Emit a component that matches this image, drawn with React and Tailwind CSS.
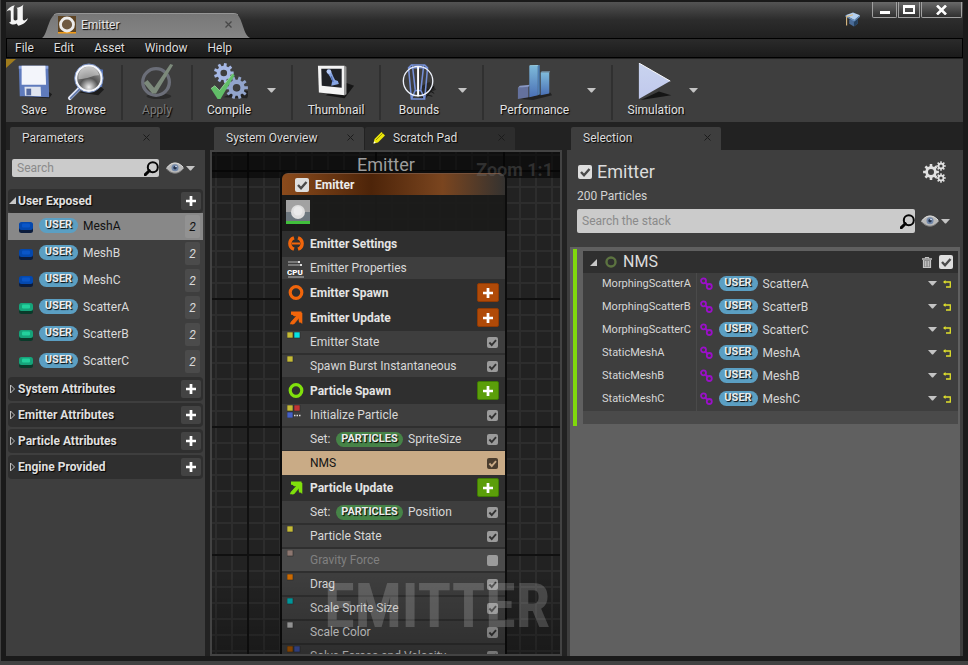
import React from "react";

const SHADOW = "[text-shadow:1px_1px_1px_#000]";

function gearPath(cx, cy, teeth, outer, inner, hole) {
  const step = (Math.PI * 2) / teeth;
  const at = (r, a) => `${(cx + r * Math.cos(a)).toFixed(2)} ${(cy + r * Math.sin(a)).toFixed(2)}`;
  let d = "";
  for (let i = 0; i < teeth; i++) {
    const a = i * step;
    d += `${i ? "L" : "M"}${at(inner, a - step * 0.3)}L${at(outer, a - step * 0.2)}L${at(outer, a + step * 0.2)}L${at(inner, a + step * 0.3)}`;
  }
  return `${d}ZM${cx + hole} ${cy}A${hole} ${hole} 0 1 0 ${cx - hole} ${cy}A${hole} ${hole} 0 1 0 ${cx + hole} ${cy}Z`;
}

function Check({ label, checked = true, size = "sm", dark = false }) {
  const box = size === "lg" ? "size-3.5 bg-[#dedede]" : dark ? "size-[11px] bg-[#4a3d2e]" : "size-[11px] bg-[#9b9b9b]";
  const stroke = size === "lg" ? "#4a4a4a" : dark ? "#c9ab86" : "#333333";
  return (
    <span className="relative flex shrink-0">
      <input type="checkbox" aria-label={label} defaultChecked={checked} className={`${box} peer appearance-none rounded-xs`} />
      <svg viewBox="0 0 14 14" className="pointer-events-none absolute inset-0 hidden size-full peer-checked:block" fill="none" stroke={stroke} strokeWidth="2.4">
        <path d="M3 7l3 3.2L11.5 4" />
      </svg>
    </span>
  );
}

function CaretDown({ className = "" }) {
  return (
    <svg width="9" height="5" viewBox="0 0 9 5" className={className}>
      <path d="M0 0h9L5 4.5H4z" fill="#c4c4c4" />
    </svg>
  );
}

function Eye() {
  return (
    <svg width="18" height="12" viewBox="0 0 18 12">
      <path d="M0 6.5C3 2.5 6 .8 9 .8s6 1.700 9 5.200C15 9.500 12 11.300 9 11.300S3 10 0 6.500z" fill="#b9b9b9" />
      <path d="M1 5.500C4 2.200 6 1 9 1s5 1.200 8 4" fill="none" stroke="#dedede" />
      <path d="M1 7.200C4 10 6 11.200 9 11.200s5-1.200 8-4" fill="none" stroke="#777" />
      <circle cx="9" cy="5.800" r="3.500" fill="#7187a8" />
      <circle cx="9" cy="5.800" r="1.700" fill="#23324c" />
      <circle cx="10" cy="4.500" r=".8" fill="#e8eefc" />
    </svg>
  );
}

function Lens() {
  return (
    <svg width="15" height="15" viewBox="0 0 15 15" fill="none" stroke="#050505">
      <circle cx="8.800" cy="6.200" r="5" strokeWidth="2" />
      <path d="M5.300 9.700L1.300 13.600" strokeWidth="3" strokeLinecap="round" />
    </svg>
  );
}

function Plus() {
  return (
    <svg width="10" height="10" viewBox="0 0 11 11">
      <path d="M4 0h3v4h4v3H7v4H4V7H0V4h4z" fill="#fff" />
    </svg>
  );
}

function Pill({ children, green = false }) {
  return (
    <span className={`flex h-[15px] shrink-0 items-center justify-center rounded-full text-[11px] font-bold text-[#ececec] ${SHADOW} ${green ? "w-[67px] bg-[#468347]" : "w-[39px] bg-[#5b9fc3]"}`}>
      {children}
    </span>
  );
}

function SearchBox({ id, placeholder, tall = false }) {
  return (
    <div className={`flex min-w-0 flex-1 items-center rounded-xs bg-[#cbcbcb] pl-[5px] ${tall ? "h-6" : "h-[18px]"}`}>
      <input id={id} type="text" aria-label={placeholder} placeholder={placeholder} className="h-full min-w-0 flex-1 bg-transparent text-xs outline-none placeholder:text-[#8a8a8a]" />
      <Lens />
    </div>
  );
}

function ViewOptions() {
  return (
    <button type="button" aria-label="View options" className="flex shrink-0 items-center gap-0.5">
      <Eye />
      <CaretDown />
    </button>
  );
}

function Tab({ title, active = true, icon }) {
  return (
    <div className={`flex h-[23px] w-[150px] items-center rounded-t-xs pb-0.5 pl-3 pr-2.5 text-xs text-[#dcdcdc] ${active ? "bg-[#3e3e3e]" : "bg-[#2d2d2d]"}`}>
      {icon}
      <span className={`flex-1 ${SHADOW}`}>{title}</span>
      <button type="button" aria-label={`Close ${title}`}>
        <svg width="7" height="7" viewBox="0 0 7 7" stroke="#1b1b1b"><path d="M.5.5l6 6M6.500.5l-6 6" /></svg>
      </button>
    </div>
  );
}

/* Title bar */

function TitleBar() {
  return (
    <header className="flex h-[38px] shrink-0 justify-between border-t-2 border-[#1a1a1a] bg-linear-to-b from-[#545454] via-[#2c2c2c] via-50% to-[#202020]">
      <div className="flex">
        <svg width="24" height="22" viewBox="0 0 24 22" className="mt-0.5" fill="#f5f5f5">
          <path d="M.5 7.500C2 4 5 2 9 1.200 8 2.300 7.600 3.300 7.600 5v9.800c0 1.900 2 2.300 3.800.8V5.200c0-.9-.4-1.200-1.400-1.200 3-.4 6-1.500 7.500-3.500-.6 1.600-.7 2.500-.7 4v10.200c0 1.500.9 2 2.100 1.500 1.400-.5 2.600-1.500 3.100-2.400-.7 3.600-4.500 7-9.800 8l-1.600-2.300C8.500 21.300 4.500 20.800 3 18.300c1.300.2 1.800-.3 1.800-1.500V7.500c0-1.800-2.300-1.600-4.300 0z" />
        </svg>
        <div className="relative ml-3 mt-[11px] flex h-[25px] w-[208px] items-center pb-0.5 pl-4 pr-[18px]">
          <svg viewBox="0 0 208 25" className="absolute inset-0 size-full" preserveAspectRatio="none">
            <defs>
              <linearGradient id="tabfill" x2="0" y2="1">
                <stop offset="0" stopColor="#777" />
                <stop offset="1" stopColor="#858585" />
              </linearGradient>
            </defs>
            <path d="M0 25C6 22 6 0 17 0H191c10 0 9 21 17 25z" fill="url(#tabfill)" />
            <path d="M12 2C14 .5 15 .5 17 .5H191c2 0 3 0 5 1.500" fill="none" stroke="#969696" />
          </svg>
          <svg width="18" height="18" viewBox="0 0 18 18" className="relative">
            <path d="M0 0h18v17H0z" fill="#5e4423" />
            <path d="M0 16h18v1.500H0z" fill="#f19a16" />
            <circle cx="9" cy="8.500" r="6.500" fill="#6f5a42" stroke="#ececec" strokeWidth="2.800" />
          </svg>
          <span className={`relative ml-[5px] flex-1 text-xs text-[#e6e6e6] ${SHADOW}`}>Emitter</span>
          <button type="button" aria-label="Close Emitter" className="relative">
            <svg width="7" height="7" viewBox="0 0 7 7" stroke="#484848" strokeWidth="1.300"><path d="M.5.5l6 6M6.500.5l-6 6" /></svg>
          </button>
        </div>
      </div>
      <div className="flex items-start gap-[11px] pr-px">
        <button type="button" aria-label="Tutorials" className="mt-2.5">
          <svg width="17" height="15" viewBox="0 0 17 16">
            <path d="M5 8v4.500l5 3 4-3V8z" fill="#496b97" />
            <path d="M10 10v5.500l4-3V7z" fill="#25415f" />
            <path d="M1 3.500l8-3 7.500 3-6 5z" fill="#b4d0f0" />
            <path d="M1 3.500l9.500 5 6-5v1.500l-6 5-9.500-5z" fill="#6890bf" />
            <path d="M9 3L2.200 5v9.500" fill="none" stroke="#d9b982" strokeWidth="1.200" />
          </svg>
        </button>
        <div className="flex h-4 gap-px">
          <button type="button" aria-label="Minimize" className="flex w-[25px] items-center justify-center rounded-b-xs border border-t-0 border-[#a0a0a0] bg-linear-to-b from-[#6a6a6a] to-[#303030]">
            <span className="mt-1.5 h-[3px] w-2.5 bg-white" />
          </button>
          <button type="button" aria-label="Maximize" className="flex w-[22px] items-center justify-center border border-t-0 border-[#a0a0a0] bg-linear-to-b from-[#6a6a6a] to-[#303030]">
            <span className="h-[9px] w-3 border-2 border-t-3 border-white" />
          </button>
          <button type="button" aria-label="Close" className="flex w-[41px] items-center justify-center rounded-b-xs border border-t-0 border-[#a0a0a0] bg-linear-to-b from-[#6a6a6a] to-[#303030]">
            <svg width="11" height="10" viewBox="0 0 11 10" stroke="#fff" strokeWidth="2.600"><path d="M1 .5l9 9M10 .5l-9 9" /></svg>
          </button>
        </div>
      </div>
    </header>
  );
}

function MenuBar() {
  return (
    <nav className="flex h-5 shrink-0 items-center gap-5 border border-black bg-linear-to-b from-[#2b2b2b] to-[#1b1b1b] pl-2 text-xs text-[#dcdcdc]">
      {["File", "Edit", "Asset", "Window", "Help"].map((m) => (
        <button key={m} type="button" className={SHADOW}>{m}</button>
      ))}
    </nav>
  );
}

/* Toolbar icons */

const icons = {
  save: (
    <>
      <path d="M6 35l30 2 3-4-4-3z" fill="#1a1a1a" />
      <path d="M4 3h31l1 33-31-1z" fill="#5f7bbd" />
      <path d="M4 3h31v3H4z" fill="#8aa3de" />
      <path d="M7 3h25l.7 20H7z" fill="#f3f5fb" />
      <path d="M10 25h17l.5 10-17-.5z" fill="#dfe4ef" />
      <path d="M12 27h5v7h-5z" fill="#54699f" />
    </>
  ),
  browse: (
    <>
      <path d="M13 31l20 3 6-6-6-5z" fill="#1c1c1c" />
      <path d="M10 9l8-6 20 4-1 18-14 4-12-3z" fill="#5271b5" />
      <path d="M14 26L3 37" stroke="#dfe5f5" strokeWidth="4" strokeLinecap="round" />
      <path d="M14.500 26.500L4 37" stroke="#6178aa" strokeWidth="2" strokeLinecap="round" />
      <circle cx="23" cy="16" r="13.500" fill="url(#glass)" stroke="#f5f7fc" strokeWidth="2.500" />
      <circle cx="23" cy="16" r="15" fill="none" stroke="#7b94c8" strokeWidth="1" />
      <path d="M12 17a11 11 0 0122-4c-6-1-11 4-22 4z" fill="#fff" opacity=".4" />
    </>
  ),
  apply: (
    <>
      <ellipse cx="22" cy="35" rx="13" ry="3" fill="#2b2b2b" />
      <circle cx="19" cy="20" r="14" fill="none" stroke="#6b6e78" strokeWidth="3.500" />
      <path d="M6 21l4-3 7 8L34 1l3 1-18 30h-4z" fill="#7c8a7b" />
    </>
  ),
  compile: (
    <>
      <path d="M14 36l25 1 3-7-10-2z" fill="#222" />
      <path fillRule="evenodd" d={gearPath(14.5, 10.5, 9, 10.5, 7.5, 3.5)} fill="#a5b7e4" />
      <path fillRule="evenodd" d={gearPath(28, 26, 10, 12, 8.5, 4)} fill="#92a4cb" />
      <path d="M1 27l4-3 5 5L24 11l2 2-15 25H8z" fill="#61bd68" />
      <path d="M1 27l4-3 5 5L24 11" fill="none" stroke="#a8e2ab" strokeWidth=".8" />
    </>
  ),
  thumbnail: (
    <>
      <path d="M9 34l20 3 10-13-8-3z" fill="#161616" />
      <path d="M1 3h28v31L2 31z" fill="#f4f4f4" />
      <path d="M4.500 6H26v20L5 24z" fill="#1f2126" />
      <path d="M11.500 11l3.500-2 2 5 2 4 3 1 1 3-8 2 1-5-2-4z" fill="#86a4e3" />
      <path d="M15 14l2 6" stroke="#4e6cb4" strokeWidth="1.200" />
      <circle cx="12.500" cy="9" r="2.500" fill="#b4c8f5" />
      <path d="M29 3l2 1v29l-2 1z" fill="#999" />
    </>
  ),
  bounds: (
    <>
      <path d="M20 38l18-10-7-8-8 4z" fill="#272727" />
      <path d="M22 38L36 24M26 38l10-13M22 32l12 3M26 26l10 6" stroke="#151515" fill="none" />
      <path d="M9 5l3-3h14l3 3-3 33H12zM9 5h20M13 2l3 26M25 2l-3 26M12 38l4-9h6l4 9" fill="none" stroke="#7590d8" strokeWidth="1.600" />
      <circle cx="19" cy="19" r="15.500" fill="none" stroke="#edf1fb" strokeWidth="1.400" />
      <path d="M19 4v31" stroke="#fff" strokeWidth="2" />
    </>
  ),
  performance: (
    <>
      <path d="M4 38l14 1 20-5-2-3z" fill="#222" />
      <path d="M2 26l11-2v12L2 38z" fill="#64719d" />
      <path d="M2 26l2-2 11-1-2 2z" fill="#8998c4" />
      <path d="M14 3l9-1v32l-9 2z" fill="url(#bar)" />
      <path d="M14 3l1-1h10l-2 1z" fill="#9fd2e4" />
      <path d="M23 3l2-1v31l-2 1z" fill="#4d7db2" />
      <path d="M26 10h9v22l-9 2z" fill="url(#bar)" />
      <path d="M26 10l1-1h9l-1 1z" fill="#8fbfe0" />
    </>
  ),
  simulation: (
    <>
      <path d="M4 39l32-5-13-4z" fill="#151515" />
      <path d="M2 0l33 19L2 38z" fill="url(#play)" />
      <path d="M2 0l33 19" stroke="#fff" strokeWidth="1" />
    </>
  ),
};

function Tool({ icon, label, width, muted = false }) {
  return (
    <button type="button" className={`flex flex-col items-center gap-px text-xs ${width} ${muted ? "text-[#7c7c7c]" : "text-[#e2e2e2]"}`}>
      <svg width="38" height="38" viewBox="0 0 40 40">{icons[icon]}</svg>
      <span className={SHADOW}>{label}</span>
    </button>
  );
}

function ToolCaret({ label }) {
  return (
    <button type="button" aria-label={`${label} options`} className="flex w-3 items-center justify-center pb-1">
      <CaretDown />
    </button>
  );
}

function Divider() {
  return <div className="my-0.5 w-0.5 bg-[#303030]" />;
}

function Toolbar() {
  return (
    <div className="relative mt-px flex h-[63px] shrink-0 bg-[#3e3e3e] pt-1 *:shrink-0">
      <svg width="0" height="0" className="absolute">
        <defs>
          <radialGradient id="glass" cx=".5" cy=".85" r=".8">
            <stop offset="0" stopColor="#f2f2f2" />
            <stop offset=".45" stopColor="#555" />
            <stop offset="1" stopColor="#a5a5a5" />
          </radialGradient>
          <linearGradient id="bar" x2="0" y2="1">
            <stop offset="0" stopColor="#7fbbdb" />
            <stop offset="1" stopColor="#4a70b5" />
          </linearGradient>
          <linearGradient id="play" x2="0" y2="1">
            <stop offset="0" stopColor="#c9d4ef" />
            <stop offset="1" stopColor="#c0c8ec" />
          </linearGradient>
        </defs>
      </svg>
      <svg width="10" height="9" className="absolute left-0 top-0"><path d="M0 0h10L0 9z" fill="#a07c1d" /></svg>
      <div className="flex pl-0.5 pr-[9px]">
        <Tool icon="save" label="Save" width="w-[52px]" />
        <Tool icon="browse" label="Browse" width="w-[52px]" />
      </div>
      <Divider />
      <Tool icon="apply" label="Apply" width="w-[68px]" muted />
      <Divider />
      <div className="flex pr-3.5">
        <Tool icon="compile" label="Compile" width="w-[72px]" />
        <ToolCaret label="Compile" />
      </div>
      <Divider />
      <Tool icon="thumbnail" label="Thumbnail" width="w-[86px]" />
      <Divider />
      <div className="flex pl-px pr-3.5">
        <Tool icon="bounds" label="Bounds" width="w-[74px]" />
        <ToolCaret label="Bounds" />
      </div>
      <Divider />
      <div className="flex pr-3.5">
        <Tool icon="performance" label="Performance" width="w-[101px]" />
        <ToolCaret label="Performance" />
      </div>
      <Divider />
      <div className="flex pl-3">
        <Tool icon="simulation" label="Simulation" width="w-[62px]" />
        <ToolCaret label="Simulation" />
      </div>
    </div>
  );
}

/* Parameters */

const params = ["MeshA", "MeshB", "MeshC", "ScatterA", "ScatterB", "ScatterC"];

function Capsule({ mesh }) {
  return (
    <svg width="14" height="11" viewBox="0 0 14 11" className="mt-0.5">
      <rect y="1" width="14" height="10" rx="2.500" fill={mesh ? "#0b1c3c" : "#0a3a2a"} />
      <rect width="14" height="8" rx="2.500" fill={mesh ? "#0448ae" : "#16a37a"} />
      <rect x="3" y="1.500" width="8" height="4" rx="1" fill={mesh ? "#0a56c8" : "#23d09c"} />
    </svg>
  );
}

function GroupHeader({ title, open = false }) {
  return (
    <div className="flex h-6 items-center rounded-sm bg-[#2f2f2f] pr-0.5">
      <svg width="10" height="10" viewBox="0 0 10 10">
        {open ? <path d="M8 1v7H1z" fill="#c8c8c8" /> : <path d="M2.500 1l4 4-4 4z" fill="none" stroke="#c0c0c0" />}
      </svg>
      <h3 className={`flex-1 text-xs font-bold text-[#e0e0e0] ${SHADOW}`}>{title}</h3>
      <button type="button" aria-label={`Add to ${title}`} className="flex h-[18px] w-5 items-center justify-center rounded-xs bg-[#434343]">
        <Plus />
      </button>
    </div>
  );
}

function ParametersPanel() {
  return (
    <section className="flex w-[199px] shrink-0 flex-col">
      <div className="pl-1"><Tab title="Parameters" /></div>
      <div className="flex min-h-0 flex-1 flex-col overflow-hidden bg-[#3e3e3e] px-0.5 pt-[9px]">
        <div className="flex items-center gap-[7px] pl-1 pr-2">
          <SearchBox id="param-search" placeholder="Search" />
          <ViewOptions />
        </div>
        <div className="mt-3 flex flex-col gap-0.5">
          <div>
            <GroupHeader title="User Exposed" open />
            <ul>
              {params.map((p, i) => (
                <li key={p} className={`flex h-[27px] items-center pl-[11px] pr-[3px] text-xs ${i === 0 ? "bg-[#888888] text-[#111]" : "text-[#dadada]"}`}>
                  <Capsule mesh={i < 3} />
                  <span className="ml-1.5 flex flex-1 items-center gap-[5px] pb-0.5">
                    <Pill>USER</Pill>
                    {p}
                  </span>
                  <span className={`flex h-[23px] w-[15px] items-center justify-center rounded-xs italic ${i === 0 ? "bg-[#929292]" : "bg-[#4b4b4b]"}`}>2</span>
                </li>
              ))}
            </ul>
          </div>
          <GroupHeader title="System Attributes" />
          <GroupHeader title="Emitter Attributes" />
          <GroupHeader title="Particle Attributes" />
          <GroupHeader title="Engine Provided" />
        </div>
      </div>
    </section>
  );
}

/* Graph */

const ORANGE = "#f1650b";
const GREEN = "#80e00c";

const stageGlyphs = {
  settings: (
    <>
      <path d="M6 1.800a6 6 0 000 11.400M10 1.800a6 6 0 010 11.400" fill="none" strokeWidth="3.400" />
      <path d="M4 7.500h8" strokeWidth="2" />
    </>
  ),
  ring: <circle cx="8" cy="7.500" r="5.800" fill="none" strokeWidth="3.200" />,
  arrow: (
    <>
      <path d="M3 3h11v10.500l-3-3V8l-5 6H2l7-8H6z" strokeWidth="0.500" />
      <path d="M3 3.200h10.500M12.500 3v9.500M12 4L3.500 13.500" fill="none" strokeWidth="3.200" />
    </>
  ),
};

const stack = [
  { kind: "stage", text: "Emitter Settings", glyph: "settings", color: ORANGE },
  { kind: "props", text: "Emitter Properties" },
  { kind: "stage", text: "Emitter Spawn", glyph: "ring", color: ORANGE, add: true },
  { kind: "stage", text: "Emitter Update", glyph: "arrow", color: ORANGE, add: true },
  { text: "Emitter State", dots: ["#c5bb36", "#06e3e3"] },
  { text: "Spawn Burst Instantaneous", dots: ["#c5bb36"] },
  { kind: "stage", text: "Particle Spawn", glyph: "ring", color: GREEN, add: true },
  { text: "Initialize Particle", dots: ["#c5bb36", "#c23535", "#4560c6"], more: true },
  { text: "SpriteSize", set: true },
  { text: "NMS", selected: true },
  { kind: "stage", text: "Particle Update", glyph: "arrow", color: GREEN, add: true },
  { text: "Position", set: true },
  { text: "Particle State", dots: ["#c5bb36"] },
  { text: "Gravity Force", dots: ["#8d7770"], off: true },
  { text: "Drag", dots: ["#cd6a00"] },
  { text: "Scale Sprite Size", dots: ["#00a4a8"] },
  { text: "Scale Color", dots: ["#adadad"] },
  { text: "Solve Forces and Velocity", dots: ["#a85600", "#3d50a0"] },
];

function Dots({ colors = [], more }) {
  return (
    <svg width="14" height="13" viewBox="0 0 14 13" className="mt-px self-start">
      {colors.map((c, i) => (
        <rect key={i} x={(i % 2) * 7} y={Math.floor(i / 2) * 7} width="6" height="6" fill={c} stroke="#2a2a2a" strokeWidth=".6" />
      ))}
      {more && <path d="M7 10.500h7" stroke="#ddd" strokeWidth="1.500" strokeDasharray="1.500 1" />}
    </svg>
  );
}

function StageRow({ row }) {
  const orange = row.color === ORANGE;
  return (
    <li className="flex h-[25px] items-center gap-1.5 pl-1.5 pr-1.5 text-xs font-bold text-[#e4e4e4]">
      <svg width="16" height="15" viewBox="0 0 16 15" stroke={row.color} fill={row.color}>{stageGlyphs[row.glyph]}</svg>
      <span className="flex-1">{row.text}</span>
      {row.add && (
        <button type="button" aria-label={`Add to ${row.text}`} className={`flex h-[19px] w-[22px] items-center justify-center rounded-xs border ${orange ? "border-[#8f3a05] bg-[#b04a08]" : "border-[#3f7a04] bg-[#5b9e0a]"}`}>
          <Plus />
        </button>
      )}
    </li>
  );
}

function ModuleRow({ row }) {
  const tone = row.selected
    ? "border-[#c9ab86] bg-[#c9ab86] text-[#141414]"
    : row.off
      ? "border-[#2f2f2f] bg-[#4b4b4b] text-[#808080]"
      : "border-[#2f2f2f] bg-[#3e3e3e] text-[#d8d8d8]";
  return (
    <li className={`flex h-6 items-center border-y pl-[5px] pr-[7px] text-xs ${tone}`}>
      <span className="flex w-[23px] self-stretch">
        {row.kind === "props" ? (
          <svg width="17" height="17" viewBox="0 0 17 17" className="mt-1">
            <path d="M1 1h11M1 4h14" stroke="#8d8d8d" strokeWidth="1.500" />
            <path d="M11 0h2v2h-2zM13 3h2v2h-2z" fill="#ddd" />
            <path d="M1 16h16" stroke="#bbb" />
            <text x="0" y="13.500" fontSize="8" fontWeight="900" fill="#fff" fontFamily="Roboto, sans-serif">CPU</text>
          </svg>
        ) : (
          <Dots colors={row.dots} more={row.more} />
        )}
      </span>
      <span className="flex flex-1 items-center gap-[5px] whitespace-nowrap">
        {row.set && (
          <>
            <span className="w-[21px]">Set:</span>
            <Pill green>PARTICLES</Pill>
          </>
        )}
        {row.text}
      </span>
      {row.kind !== "props" && <Check label={row.text} checked={!row.off} dark={row.selected} />}
    </li>
  );
}

function GraphPanel() {
  return (
    <section className="flex w-[352px] shrink-0 flex-col">
      <div className="flex gap-px pl-1">
        <Tab title="System Overview" />
        <Tab
          title="Scratch Pad"
          active={false}
          icon={
            <svg width="13" height="13" viewBox="0 0 13 13" className="-ml-1 mr-[7px]">
              <path d="M.5 12.500l1-4.500 7-7 3.500 3.500-7 7z" fill="#ece80a" />
              <path d="M.5 12.500l.7-2.200 1.600 1.600z" fill="#fff" />
              <path d="M3 9l7-7" stroke="#8b8600" strokeWidth=".8" />
            </svg>
          }
        />
      </div>
      <div className="relative min-h-0 flex-1 overflow-hidden border-2 border-[#434343] bg-[#222222] [background-image:linear-gradient(90deg,#101010_2px,transparent_2px),linear-gradient(#101010_2px,transparent_2px),linear-gradient(90deg,#2d2d2d_2px,transparent_2px),linear-gradient(#2d2d2d_2px,transparent_2px)] [background-size:128px_128px,128px_128px,16px_16px,16px_16px] [background-position:35px_18px,35px_18px,3px_2px,3px_2px]">
        <div className="flex h-[26px] items-center justify-center bg-black/55 text-lg text-[#9d9d9d]">Emitter</div>
        <div className="absolute left-[68px] top-[19px] w-[227px] overflow-hidden rounded-t-lg border-2 border-[#0c0c0c]">
          <div className="flex h-[22px] items-center gap-1.5 border-t border-[#77513a] bg-[linear-gradient(90deg,#8b4b1c,#4d2409_40%,#7a451f_72%,#343230)] pl-[13px] text-xs font-bold text-[#ececec]">
            <Check label="Emitter enabled" size="lg" />
            Emitter
          </div>
          <div className="h-9 bg-[#1b1b1a]/95 pl-1 pt-[5px]">
            <svg width="24" height="24" viewBox="0 0 24 24">
              <path d="M0 0h24v12H0z" fill="#a2a2a2" />
              <path d="M0 12h24v9H0z" fill="#6d777e" />
              <path d="M0 21h24v3H0z" fill="#41bf3c" />
              <circle cx="12" cy="12" r="7" fill="#dedede" />
              <circle cx="12" cy="11" r="4.500" fill="#eaeaea" />
            </svg>
          </div>
          <ul className="bg-[#2f2f2f]">
            {stack.map((row) => (row.kind === "stage" ? <StageRow key={row.text} row={row} /> : <ModuleRow key={row.text} row={row} />))}
          </ul>
        </div>
        <div className="pointer-events-none absolute inset-x-0 bottom-0 h-20 bg-linear-to-b from-transparent to-black/25" />
        <div className="pointer-events-none absolute right-[7px] top-1.5 text-lg leading-6 font-bold text-[#707070]/35">Zoom 1:1</div>
        <div className="pointer-events-none absolute bottom-4 right-2.5 font-['Roboto_Condensed','Open_Sans_Condensed','Noto_Sans_Condensed',Roboto,sans-serif] text-[62px] leading-16 font-bold text-white/18">EMITTER</div>
      </div>
    </section>
  );
}

/* Selection */

const inputs = [
  ["MorphingScatterA", "ScatterA"],
  ["MorphingScatterB", "ScatterB"],
  ["MorphingScatterC", "ScatterC"],
  ["StaticMeshA", "MeshA"],
  ["StaticMeshB", "MeshB"],
  ["StaticMeshC", "MeshC"],
];

function SelectionPanel() {
  return (
    <section className="flex min-w-0 flex-1 flex-col">
      <div className="pl-1"><Tab title="Selection" /></div>
      <div className="flex min-h-0 flex-1 flex-col bg-[#3e3e3e] px-[3px] pt-2">
        <div className="flex items-center gap-[5px] pl-2 pr-3.5">
          <Check label="Emitter enabled in stack" size="lg" />
          <h2 className="flex-1 text-lg text-[#dcdcdc]">Emitter</h2>
          <button type="button" aria-label="Settings">
            <svg width="23" height="22" viewBox="0 0 23 22" fill="#e0e0e0" fillRule="evenodd">
              <path d={gearPath(8, 11, 8, 8, 5.8, 3)} />
              <path d={gearPath(18, 5, 8, 4.8, 3.4, 1.6)} />
              <path d={gearPath(18, 17, 8, 4.8, 3.4, 1.6)} />
            </svg>
          </button>
        </div>
        <p className="pl-[7px] text-xs leading-5 text-[#d2d2d2]">200 Particles</p>
        <div className="mt-[3px] flex items-center gap-1.5 pl-[7px] pr-2.5">
          <SearchBox id="stack-search" placeholder="Search the stack" tall />
          <ViewOptions />
        </div>
        <div className="mt-3.5 flex-1 bg-[#606060] pl-[3px] pr-0.5 pt-0.5">
          <div className="border-l-4 border-[#80d80c] pl-1.5 pb-0.5 pt-0.5">
            <div className="flex h-[22px] items-center bg-[#2f2f2f] pl-1.5 pr-[5px]">
              <svg width="9" height="9" viewBox="0 0 9 9"><path d="M8 1v7H1z" fill="#c8c8c8" /></svg>
              <svg width="12" height="12" viewBox="0 0 12 12" className="ml-[7px]"><circle cx="6" cy="6" r="4.500" fill="none" stroke="#5c7340" strokeWidth="2.400" /></svg>
              <h3 className="ml-1.5 flex-1 text-base leading-5 text-[#dcdcdc]">NMS</h3>
              <button type="button" aria-label="Delete NMS" className="mr-[7px]">
                <svg width="10" height="11" viewBox="0 0 10 11" fill="#8a8a8a" stroke="#c4c4c4">
                  <path d="M0 2h10" strokeWidth="1.500" />
                  <path d="M3.500 1.500V.5h3v1M1.500 3v7.500h7V3M3.700 4v5.500M6.300 4v5.500" strokeWidth="1.200" />
                </svg>
              </button>
              <Check label="NMS enabled" size="lg" />
            </div>
            <table className="w-full table-fixed bg-[#3e3e3e] text-xs text-[#d6d6d6]">
              <colgroup>
                <col className="w-[113px]" />
                <col />
              </colgroup>
              <tbody>
                {inputs.map(([name, value]) => (
                  <tr key={name}>
                    <th scope="row" className="border-r border-[#4a4a4a] p-0 pl-[19px] pr-[5px] text-left text-[11px] font-normal">
                      <span className="block overflow-hidden whitespace-nowrap">{name}</span>
                    </th>
                    <td className="p-0">
                      <div className="flex h-[23px] items-center pb-0.5 pl-[3px] pr-1.5">
                        <svg width="13" height="13" viewBox="0 0 13 13" fill="none" stroke="#9a10c8" strokeWidth="1.800">
                          <circle cx="3.500" cy="3.800" r="2.500" />
                          <circle cx="9.300" cy="9.500" r="2.500" />
                          <path d="M5 5.300l3 3" strokeWidth="2" />
                        </svg>
                        <span className="ml-1.5 flex flex-1 items-center gap-[5px]">
                          <Pill>USER</Pill>
                          {value}
                        </span>
                        <button type="button" aria-label={`${name} options`} className="mr-1.5"><CaretDown /></button>
                        <button type="button" aria-label={`Reset ${name}`}>
                          <svg width="9" height="8" viewBox="0 0 9 8" fill="none" stroke="#dfe02c" strokeWidth="1.300">
                            <path d="M1 2h6.300v5H3" />
                            <path d="M2.500 0v4L0 2z" fill="#dfe02c" stroke="none" />
                          </svg>
                        </button>
                      </div>
                    </td>
                  </tr>
                ))}
              </tbody>
            </table>
            <div className="h-[13px] bg-[#4a4a4a]" />
          </div>
        </div>
      </div>
    </section>
  );
}

export default function App() {
  return (
    <div className="h-screen border-b-4 border-l border-[#414141] font-[Roboto,'Liberation_Sans',sans-serif]">
      <div className="flex h-full flex-col overflow-hidden border-b-5 border-x-5 border-[#1a1a1a] bg-[#222222]">
        <TitleBar />
        <MenuBar />
        <Toolbar />
        <main className="flex min-h-0 flex-1 gap-[5px] pt-[5px]">
          <ParametersPanel />
          <GraphPanel />
          <SelectionPanel />
        </main>
      </div>
    </div>
  );
}
